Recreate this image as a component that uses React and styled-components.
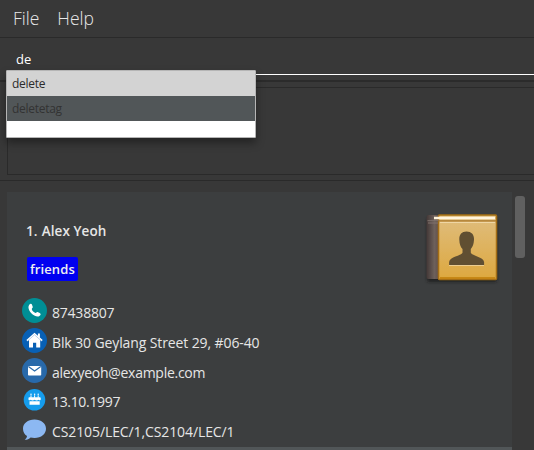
import React from 'react';
import styled, { createGlobalStyle } from 'styled-components';

const GlobalStyle = createGlobalStyle`
  * { box-sizing: border-box; }
  body { margin: 0; background: #383838; font-family: 'Open Sans', 'Noto Sans', sans-serif; overflow: hidden; }
`;

const Window = styled.div`
  width: 534px;
  height: 450px;
  display: flex;
  flex-direction: column;
  overflow: hidden;
  background: #383838;
  color: #e6e6e6;
`;

const MenuBar = styled.nav`
  display: flex;
  flex: none;
  gap: 18px;
  height: 38px;
  padding-left: 13px;
  border-bottom: 1px solid #2a2a2a;
`;

const MenuItem = styled.span`
  font-size: 17.5px;
  font-weight: 300;
  line-height: 37px;
  color: #e8e8e8;
`;

const CommandArea = styled.section`
  position: relative;
  flex: none;
  height: 44px;
  border-bottom: 2px solid #2b2b2b;
`;

const CommandField = styled.div`
  height: 37px;
  margin-left: 7px;
  padding: 12px 0 0 9px;
  border-bottom: 1px solid #fff;
  color: #fff;
  font-size: 13px;
  line-height: 19px;
`;

const Suggestions = styled.ul`
  position: absolute;
  z-index: 2;
  left: 6px;
  top: 32px;
  width: 250px;
  height: 68px;
  margin: 0;
  padding: 0;
  list-style: none;
  background: #fff;
  border: 1px solid #b5b5b5;
  border-radius: 1px;
  box-shadow: 0 5px 9px rgba(0, 0, 0, 0.38);
`;

const Suggestion = styled.li`
  height: 25px;
  padding-left: 5px;
  font-size: 12px;
  line-height: 26px;
  letter-spacing: -0.28px;
  background: ${(p) => (p.$selected ? '#d3d3d3' : '#515658')};
  color: ${(p) => (p.$selected ? '#2b2b2b' : '#333')};
`;

const ResultArea = styled.section`
  flex: none;
  height: 99px;
  padding: 5px 0 5px 7px;
  border-bottom: 1px solid #2a2a2a;
`;

const ResultDisplay = styled.div`
  height: 88px;
  border: 1px solid #2a2a2a;
  border-right: 0;
`;

const PersonArea = styled.main`
  display: flex;
  gap: 3px;
  padding: 11px 0 0 7px;
`;

const PersonList = styled.div`
  width: 505px;
  height: 258px;
  background: #515658;
`;

const PersonCard = styled.article`
  display: flex;
  justify-content: space-between;
  height: 255px;
  padding: 0 12px 0 15px;
  background: #3c3e3f;
`;

const Details = styled.div`
  padding-top: 28px;
`;

const Name = styled.h2`
  display: flex;
  gap: 4px;
  height: 22px;
  margin: 0 0 0 4px;
  font-size: 13.5px;
  font-weight: 600;
  line-height: 22px;
  letter-spacing: 0.1px;
`;

const Tag = styled.span`
  display: block;
  width: 51px;
  height: 24px;
  margin: 15px 0 15px 5px;
  padding-left: 3px;
  border-radius: 2px;
  background: #0000f0;
  color: #f0f0f0;
  font-size: 13px;
  font-weight: 600;
  line-height: 24px;
  letter-spacing: 0.1px;
`;

const FieldRow = styled.div`
  display: flex;
  align-items: flex-start;
  gap: 5px;
  height: ${(p) => p.$height || 30}px;
  padding-top: 2px;
  font-size: 14px;
  line-height: 20px;
  white-space: nowrap;
  letter-spacing: ${(p) => p.$spacing || 0}px;
`;

const FieldText = styled.span`
  padding-top: 5px;
`;

const FieldIcon = styled.svg`
  display: block;
  flex: none;
  width: 25px;
  height: 25px;
`;

const BookIcon = styled.svg`
  display: block;
  width: 80px;
  height: 80px;
  margin-top: 16px;
`;

const ScrollThumb = styled.div`
  width: 10px;
  height: 62px;
  margin-top: 4px;
  border-radius: 3px;
  background: #606060;
`;

const PhoneIcon = () => (
  <FieldIcon viewBox="0 0.5 25 25">
    <circle cx="12.5" cy="13" r="12.5" fill="#008e95" />
    <path d="M7.1 7.4c1.2-1.5 2.4-1.6 3 .2l.7 2c.2.8-1.1 1.4-1 2.1.4 1.5 2 3.1 3.6 3.800.8.2 1.3-1.2 2.2-.9l2.1 1c1.500.8 1.100 1.900-.3 3-2 1.500-6-.6-8.100-2.900-2.200-2.300-3.700-6.100-2.200-8.300z" fill="#fff" />
  </FieldIcon>
);

const HomeIcon = () => (
  <FieldIcon viewBox="0 0.5 25 25">
    <circle cx="12.5" cy="13" r="12.5" fill="#0860b5" />
    <path d="M12.500 5.200 4.400 12.500 5.500 13.800 7 12.500V20h4v-4.800h3.200V20h4v-7.500l1.400 1.300 1.100-1.300-2.800-2.500V6.100h-2v2.200z" fill="#fff" />
    <path d="m5.500 13.500 7-6.200 7 6.200" fill="none" stroke="#91b4dc" strokeWidth=".6" />
  </FieldIcon>
);

const MailIcon = () => (
  <FieldIcon viewBox="0 0.5 25 25">
    <circle cx="12.5" cy="13" r="12.5" fill="#2869aa" />
    <rect x="6" y="8.5" width="13.200" height="9.500" rx=".8" fill="#fff" />
    <path d="m6.400 9 6.200 4.600L18.800 9" fill="none" stroke="#2869aa" strokeWidth="1.200" />
  </FieldIcon>
);

const CakeIcon = () => (
  <FieldIcon viewBox="0 0 25 25">
    <circle cx="12.5" cy="12.8" r="10.800" fill="#159cec" />
    <path d="M9 8.300v2.500M12.600 8.300v2.500M16.200 8.300v2.500" stroke="#fff" strokeWidth="1" />
    <g fill="#fff">
      <circle cx="9" cy="7.300" r=".75" />
      <circle cx="12.6" cy="7.300" r=".75" />
      <circle cx="16.2" cy="7.300" r=".75" />
      <path d="M7.300 10.200h10.600q.8 0 .8.800v1.800q-1 1.100-2.100 0-1.900 1.300-4 0-2.100 1.300-4 0-1.100 1.100-2.100 0V11q0-.8.8-.8zM7.500 14.300h10.200v3.500H7.500z" />
    </g>
  </FieldIcon>
);

const ChatIcon = () => (
  <FieldIcon viewBox="0 0.5 25 25">
    <path d="M12.500 3C5.700 3 1 7 1 12.200c0 3.200 1.500 5.700 4 7.200-.2 1.800-1.100 2.800-2.300 3.900 2.300.1 4.400-.8 5.900-2.300 1.200.3 2.500.5 3.900.5 6.800 0 11.500-4.200 11.500-9.300S19.300 3 12.500 3z" fill="#8cb8f2" />
  </FieldIcon>
);

const AddressBook = () => (
  <BookIcon viewBox="0 0 80 80">
    <defs>
      <linearGradient id="cover" x1="0" y1="0" x2="0" y2="1">
        <stop offset="0" stopColor="#dfbd7e" />
        <stop offset="1" stopColor="#dda83f" />
      </linearGradient>
      <linearGradient id="spine">
        <stop offset="0" stopColor="#433936" />
        <stop offset=".6" stopColor="#6e605b" />
        <stop offset="1" stopColor="#594b46" />
      </linearGradient>
      <filter id="shadow" x="-20%" y="-20%" width="140%" height="140%">
        <feGaussianBlur stdDeviation="1.7" />
      </filter>
      <filter id="soften">
        <feGaussianBlur stdDeviation="0.45" />
      </filter>
    </defs>
    <rect x="7" y="10" width="70" height="64" rx="2" fill="#181818" opacity=".7" filter="url(#shadow)" />
    <g filter="url(#soften)">
      <path d="M9 7h11v64H8q-1.500 0-1.500-2V9q0-2 2.500-2z" fill="url(#spine)" />
      <rect x="18.500" y="7" width="58" height="64.500" rx="1" fill="url(#cover)" stroke="#a36d12" strokeWidth="1.500" />
      <path d="M14 10h61" stroke="#fff4dc" strokeWidth="2.400" />
      <path d="M18.500 12.800H76" stroke="#aa7728" strokeWidth="1.200" />
      <path d="M7.500 12.700h11M8 15h10" stroke="#81736e" strokeWidth="1" />
      <path d="M20 14.500h55" stroke="#efd6a5" strokeWidth="1" />
      <path d="M20 70h55" stroke="#bf7e0c" strokeWidth="1.500" />
      <path d="M46.500 23.500c-5 0-7.500 3.300-7.200 8.300.1 4.200 1.300 7.400 3.200 9.300v3.600c-1.500 3.200-12.800 4-13.400 9.200V57h35v-3c-.6-5.300-11.800-6-13.300-9.300V41c1.900-1.900 3-5.200 3.200-9.300.3-5-2.500-8.200-7.500-8.200z" fill="#615033" />
      <path d="M29 57.500h35" stroke="#f0d5a1" strokeWidth=".8" />
    </g>
  </BookIcon>
);

const fields = [
  { Icon: PhoneIcon, text: '87438807', spacing: -0.22 },
  { Icon: HomeIcon, text: 'Blk 30 Geylang Street 29, #06-40', spacing: -0.11 },
  { Icon: MailIcon, text: 'alexyeoh@example.com', spacing: -0.27, height: 29 },
  { Icon: CakeIcon, text: '13.10.1997', spacing: -0.33 },
  { Icon: ChatIcon, text: 'CS2105/LEC/1,CS2104/LEC/1', spacing: -0.1 },
];

export default function App() {
  return (
    <Window>
      <GlobalStyle />
      <MenuBar>
        <MenuItem>File</MenuItem>
        <MenuItem>Help</MenuItem>
      </MenuBar>
      <CommandArea>
        <CommandField>de</CommandField>
        <Suggestions>
          <Suggestion $selected>delete</Suggestion>
          <Suggestion>deletetag</Suggestion>
        </Suggestions>
      </CommandArea>
      <ResultArea>
        <ResultDisplay />
      </ResultArea>
      <PersonArea>
        <PersonList>
          <PersonCard>
            <Details>
              <Name><span>1.</span><span>Alex Yeoh</span></Name>
              <Tag>friends</Tag>
              {fields.map(({ Icon, text, spacing, height }) => (
                <FieldRow key={text} $spacing={spacing} $height={height}>
                  <Icon />
                  <FieldText>{text}</FieldText>
                </FieldRow>
              ))}
            </Details>
            <AddressBook />
          </PersonCard>
        </PersonList>
        <ScrollThumb />
      </PersonArea>
    </Window>
  );
}
